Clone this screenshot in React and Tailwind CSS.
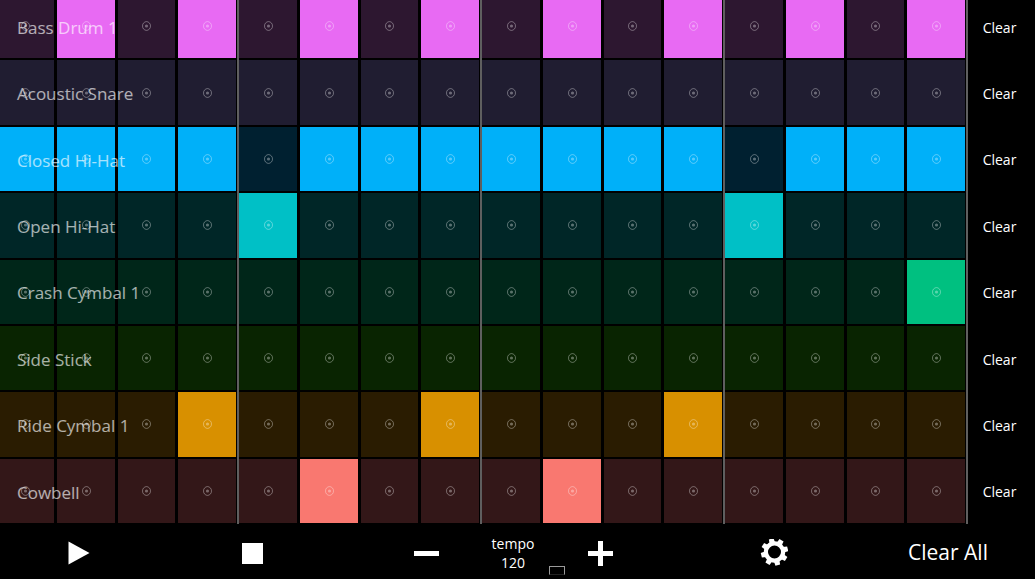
import { useState } from 'react';

const BEATS = 16;

// one entry per drum: steps is the list of beats that are switched on
const TRACKS = [
  { name: 'Bass Drum 1', off: 'bg-[#2d1730]', on: 'bg-[#e86af3]', steps: [1, 3, 5, 7, 9, 11, 13, 15] },
  { name: 'Acoustic Snare', off: 'bg-[#201d31]', on: 'bg-[#9590ff]', steps: [] },
  { name: 'Closed Hi-Hat', off: 'bg-[#002030]', on: 'bg-[#00b0f9]', steps: [0, 1, 2, 3, 5, 6, 7, 8, 9, 10, 11, 13, 14, 15] },
  { name: 'Open Hi-Hat', off: 'bg-[#002627]', on: 'bg-[#00c0c6]', steps: [4, 12] },
  { name: 'Crash Cymbal 1', off: 'bg-[#002619]', on: 'bg-[#00c080]', steps: [15] },
  { name: 'Side Stick', off: 'bg-[#092401]', on: 'bg-[#39b600]', steps: [] },
  { name: 'Ride Cymbal 1', off: 'bg-[#2a1c01]', on: 'bg-[#d89000]', steps: [3, 7, 11] },
  { name: 'Cowbell', off: 'bg-[#331718]', on: 'bg-[#f97870]', steps: [5, 9] },
];

const initialPattern = TRACKS.map((t) =>
  Array.from({ length: BEATS }, (_, i) => t.steps.includes(i))
);

function Ring() {
  return (
    <svg className="h-[10px] w-[10px] text-white/35" viewBox="0 0 10 10" fill="none">
      <ellipse cx="5.5" cy="5" rx="4" ry="4.4" stroke="currentColor" strokeWidth="1" />
      <circle cx="5.5" cy="5" r="1.6" fill="currentColor" />
    </svg>
  );
}

function Gear() {
  return (
    <svg className="h-7 w-7" viewBox="-14.5 -13 28 28" fill="none">
      <circle r="8.6" stroke="white" strokeWidth="4.2" />
      {[-14, 31, 76, 121, 166, 211, 256, 301].map((a) => (
        <path key={a} d="M-2.4 -13.6H2.4L2.8 -9H-2.8Z" fill="white" transform={`rotate(${a})`} />
      ))}
    </svg>
  );
}

function Track({ track, beats, onToggle, onClear }) {
  return (
    <div className="relative flex min-h-0 flex-1">
      {[0, 4, 8, 12].map((start) => (
        <div key={start} className="grid flex-1 grid-cols-4 gap-[3px] border-r-2 border-[#5f5f5f] py-px pr-px">
          {beats.slice(start, start + 4).map((active, i) => (
            <button
              key={i}
              type="button"
              aria-label={`${track.name} beat ${start + i + 1}`}
              aria-pressed={active}
              onClick={() => onToggle(start + i)}
              className={`flex items-center justify-center ${active ? track.on : track.off}`}
            >
              <Ring />
            </button>
          ))}
        </div>
      ))}
      <button type="button" onClick={onClear} className="w-[67px] pt-[3px] pr-1 text-sm">
        Clear
      </button>

      {/* drum name over the first cells */}
      <span className="pointer-events-none absolute inset-y-0 left-[21px] flex items-center pt-[3px] text-[17px] text-white/65">
        {track.name}
      </span>
    </div>
  );
}

export default function App() {
  const [pattern, setPattern] = useState(initialPattern);
  const [tempo, setTempo] = useState(120);
  const [playing, setPlaying] = useState(false);

  const toggle = (row, beat) =>
    setPattern((p) => p.map((r, i) => (i === row ? r.map((v, j) => (j === beat ? !v : v)) : r)));
  const clear = (row) =>
    setPattern((p) => p.map((r, i) => (i === row ? r.map(() => false) : r)));
  const clearAll = () => setPattern((p) => p.map((r) => r.map(() => false)));

  return (
    <main className="flex h-screen flex-col overflow-hidden bg-black font-['Open_Sans',sans-serif] text-white">
      {/* step grid */}
      <section className="-mt-[7px] -ml-1 flex min-h-0 flex-1 flex-col">
        {TRACKS.map((track, i) => (
          <Track
            key={track.name}
            track={track}
            beats={pattern[i]}
            onToggle={(beat) => toggle(i, beat)}
            onClear={() => clear(i)}
          />
        ))}
      </section>

      {/* transport bar */}
      <footer className="relative -ml-[9px] grid h-[55px] shrink-0 grid-cols-6 pb-px">
        <button type="button" aria-label="Play" aria-pressed={playing} onClick={() => setPlaying(true)} className="flex items-center justify-center pt-1">
          <svg className="h-6 w-6" viewBox="0 0 24 24" fill="white">
            <path d="M2.5 0.5L23.5 12L2.5 23.5Z" />
          </svg>
        </button>
        <button type="button" aria-label="Stop" onClick={() => setPlaying(false)} className="flex items-center justify-center pt-1">
          <span className="h-[21px] w-[21px] bg-white" />
        </button>
        <div className="col-span-2 flex justify-center">
          <button type="button" aria-label="Slower" onClick={() => setTempo(tempo - 1)} className="flex w-1/4 items-center justify-center pt-1">
            <span className="h-[5px] w-[25px] bg-white" />
          </button>
          <div className="flex w-1/4 flex-col items-center justify-center pt-1 text-sm leading-[19px]">
            <span>tempo</span>
            <span>{tempo}</span>
          </div>
          <button type="button" aria-label="Faster" onClick={() => setTempo(tempo + 1)} className="flex w-1/4 items-center justify-center pt-1">
            <svg className="h-[25px] w-[25px]" viewBox="0 0 25 25" fill="white">
              <path d="M10 0h5v10h10v5h-10v10h-5v-10h-10v-5h10z" />
            </svg>
          </button>
        </div>
        <button type="button" aria-label="Settings" className="flex items-center justify-center pt-1">
          <Gear />
        </button>
        <button type="button" onClick={clearAll} className="pt-1 text-[21px]">
          Clear All
        </button>
        <span className="absolute bottom-1 left-[558px] h-[9px] w-4 border border-[#9a9a9a] border-b-[#222222]" />
      </footer>
    </main>
  );
}
